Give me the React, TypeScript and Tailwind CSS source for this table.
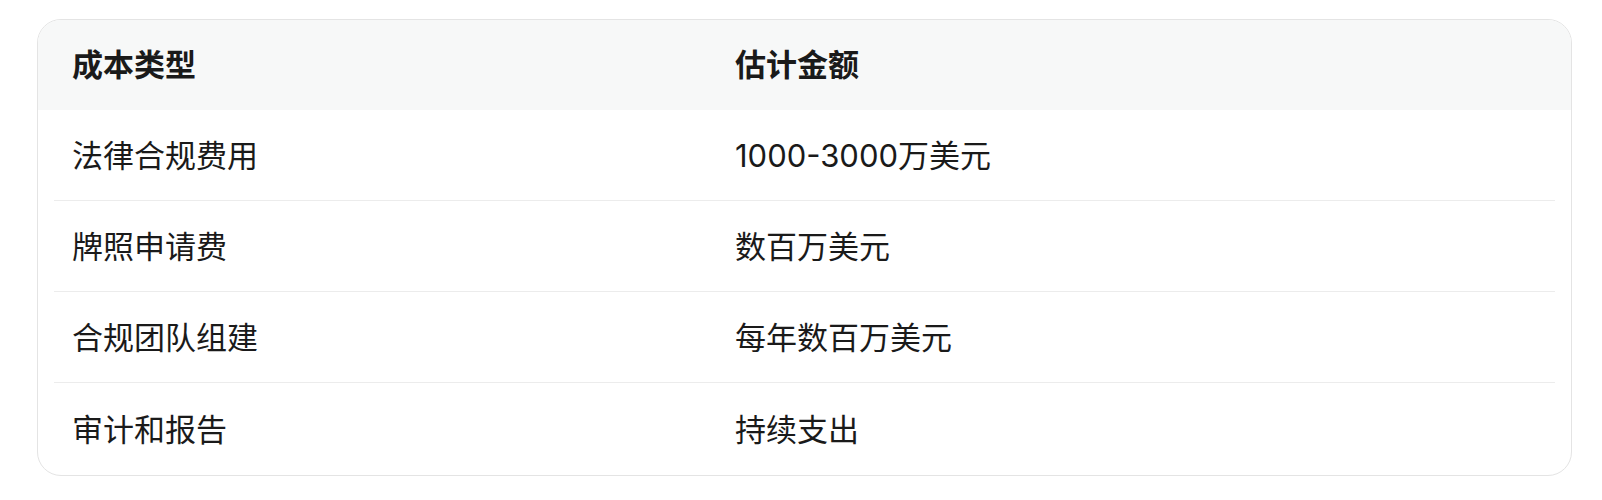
import React from 'react';

const rows = [
  { type: '法律合规费用', amount: '1000-3000万美元' },
  { type: '牌照申请费', amount: '数百万美元' },
  { type: '合规团队组建', amount: '每年数百万美元' },
  { type: '审计和报告', amount: '持续支出' },
];

export default function App() {
  return (
    <div
      className="w-[1602px] h-[500px] bg-white pt-[19px] pl-[37px]"
      style={{ fontFamily: 'Inter, "Noto Sans CJK SC", sans-serif' }}
    >
      <div className="w-[1535px] rounded-3xl border border-[#e4e4e4] overflow-hidden text-[31px] text-[#1a1a1a]">
        {/* Header */}
        <div className="bg-[#f7f8f8] px-4">
          <div className="flex items-center h-[90px] font-bold">
            <div className="w-[663px] pl-[18px]">成本类型</div>
            <div className="pl-[18px]">估计金额</div>
          </div>
        </div>

        {/* Body */}
        <div className="px-4">
          {rows.map((row, i) => (
            <div
              key={row.type}
              className={
                i < rows.length - 1
                  ? 'flex items-center h-[91px] pt-[3px] border-b border-[#ececec]'
                  : 'flex items-center h-[92px] pt-[3px]'
              }
            >
              <div className="w-[663px] pl-[18px]">{row.type}</div>
              <div className="pl-[18px]">{row.amount}</div>
            </div>
          ))}
        </div>
      </div>
    </div>
  );
}
